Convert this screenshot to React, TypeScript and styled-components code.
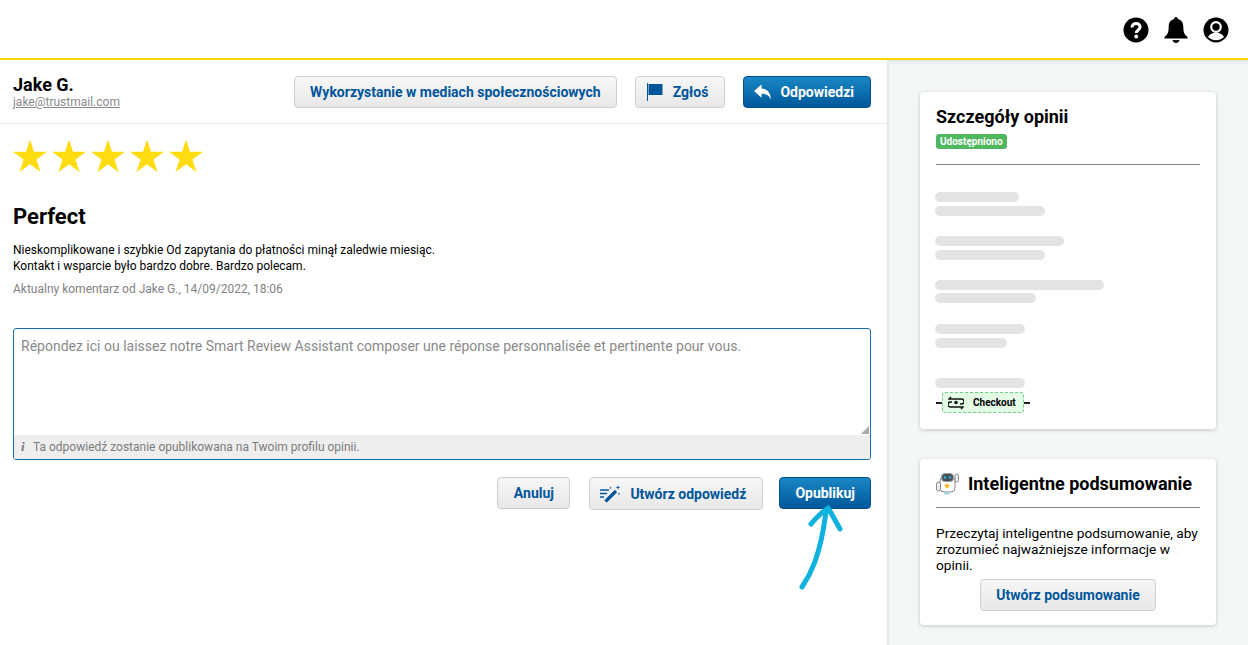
import { createGlobalStyle } from 'styled-components';
import styled from 'styled-components';

const GlobalStyle = createGlobalStyle`
  * {
    box-sizing: border-box;
  }

  html,
  body {
    margin: 0;
    height: 645px;
    overflow: hidden;
    background: #fff;
    font-family: Roboto, 'Liberation Sans', sans-serif;
    color: #000;
  }
`;

const Page = styled.div`
  width: 1248px;
  height: 645px;
  display: flex;
  flex-direction: column;
`;

const TopBar = styled.header`
  height: 60px;
  flex: none;
  padding: 2px 19px 0 0;
  display: flex;
  justify-content: flex-end;
  align-items: center;
  gap: 14px;
  border-bottom: 2px solid #ffd800;

  svg {
    display: block;
  }
`;

const Main = styled.div`
  flex: 1;
  display: flex;
  min-height: 0;
`;

const Content = styled.main`
  position: relative;
  width: 889px;
  flex: none;
  border-right: 2px solid #e6e8e9;
`;

const ReviewHeader = styled.div`
  height: 64px;
  padding: 16px 16px 0 13px;
  display: flex;
  align-items: flex-start;
  border-bottom: 1px solid #ececec;
`;

const Author = styled.div`
  flex: 1;
`;

const AuthorName = styled.div`
  font-size: 18px;
  line-height: 18px;
  font-weight: 700;
`;

const AuthorMail = styled.a`
  display: block;
  margin-top: 1px;
  font-size: 12px;
  line-height: 14px;
  color: #8a8a8a;
  text-decoration: underline;
`;

const Button = styled.button<{ $primary?: boolean; $icon?: boolean; $height?: number }>`
  height: ${(p) => p.$height ?? 32}px;
  padding: 0 ${(p) => (p.$icon ? 16 : 15)}px 0 ${(p) => (p.$icon ? 10 : 15)}px;
  display: inline-flex;
  align-items: center;
  justify-content: center;
  gap: 9px;
  border-radius: 4px;
  border: 1px solid ${(p) => (p.$primary ? '#004f8f' : '#cfcfcf')};
  background: ${(p) =>
    p.$primary
      ? 'linear-gradient(#1a87c4, #00589b)'
      : 'linear-gradient(#f7f7f7, #e8e8e8)'};
  color: ${(p) => (p.$primary ? '#fff' : '#00559b')};
  font-family: Roboto, 'Liberation Sans', sans-serif;
  font-size: 14px;
  font-weight: 700;
  white-space: nowrap;
`;

const CancelButton = styled(Button)`
  width: 73px;
  padding: 0;
  margin-right: 3px;
`;

const HeaderActions = styled.div`
  display: flex;
  gap: 18px;
`;

const Body = styled.div`
  padding: 15px 16px 0 13px;
`;

const Stars = styled.div`
  display: flex;
  gap: 5px;
  height: 34px;

  svg {
    display: block;
  }
`;

const Title = styled.h1`
  margin: 28px 0 0;
  font-size: 22px;
  line-height: 32px;
  font-weight: 700;
`;

const Text = styled.p`
  margin: 9px 0 0;
  font-size: 12px;
  line-height: 16px;
`;

const Meta = styled.div`
  margin-top: 7px;
  font-size: 12px;
  line-height: 16px;
  color: #828282;
`;

const ReplyBox = styled.div`
  position: relative;
  margin-top: 31px;
  height: 132px;
  border: 1px solid #1b6fae;
  border-radius: 3px;
  display: flex;
  flex-direction: column;
  overflow: hidden;
`;

const Placeholder = styled.div`
  flex: 1;
  padding: 8px 7px;
  font-size: 14px;
  line-height: 18px;
  color: #8a8a8a;
`;

const Grip = styled.span`
  position: absolute;
  right: 1px;
  bottom: 25px;
  width: 8px;
  height: 8px;
  background: #a9a9a9;
  clip-path: polygon(100% 0, 100% 100%, 0 100%);
`;

const Hint = styled.div`
  height: 24px;
  flex: none;
  padding: 0 7px;
  display: flex;
  align-items: center;
  gap: 8px;
  background: #eee;
  font-size: 12px;
  color: #7c7c7c;
`;

const HintIcon = styled.i`
  font-family: 'Liberation Serif', serif;
  font-size: 13px;
  font-weight: 700;
  color: #777;
  width: 4px;
`;

const ReplyActions = styled.div`
  margin-top: 17px;
  display: flex;
  justify-content: flex-end;
  gap: 16px;
`;

const ArrowOverlay = styled.svg`
  position: absolute;
  left: 790px;
  top: 440px;
`;

const Side = styled.aside`
  flex: 1;
  background: #f4f7f8;
  padding: 32px 32px 0 31px;
  display: flex;
  flex-direction: column;
  gap: 30px;
  box-shadow: inset 0 4px 4px -2px rgba(0, 0, 0, 0.08);
`;

const Card = styled.section<{ $height: number }>`
  height: ${(p) => p.$height}px;
  flex: none;
  padding: 0 16px;
  background: #fff;
  border-radius: 4px;
  box-shadow: 0 1px 4px rgba(0, 0, 0, 0.2);
`;

const CardTitle = styled.h2`
  margin: 0;
  padding-top: 14px;
  font-size: 18px;
  line-height: 22px;
  font-weight: 700;
`;

const Badge = styled.span`
  display: inline-block;
  margin-top: 6px;
  padding: 0 4px;
  height: 15px;
  border-radius: 3px;
  background: #4fb75f;
  color: #fff;
  font-size: 10px;
  line-height: 15px;
  font-weight: 700;
  vertical-align: top;
`;

const Rule = styled.hr`
  margin: 15px 0 0;
  border: 0;
  border-top: 1px solid #808080;
`;

const Skeletons = styled.div`
  margin-top: 27px;
  display: flex;
  flex-direction: column;
  margin-left: -1px;
`;

const Skeleton = styled.div<{ $width: number; $gap: number }>`
  width: ${(p) => p.$width}px;
  height: 10px;
  margin-top: ${(p) => p.$gap}px;
  border-radius: 5px;
  background: #e3e3e3;
`;

const CheckoutRow = styled.div`
  margin: 4px 0 0 1px;
  display: flex;
  align-items: center;
`;

const Tick = styled.span`
  width: 6px;
  height: 2px;
  background: #222;
`;

const Checkout = styled.div`
  width: 82px;
  height: 21px;
  display: flex;
  align-items: center;
  gap: 9px;
  padding-left: 5px;
  border: 1.5px dashed #6fd08a;
  border-radius: 3px;
  background: #e4fbe6;
  font-size: 10px;
  font-weight: 700;
  white-space: nowrap;
`;

const SummaryHead = styled.div`
  height: 49px;
  display: flex;
  align-items: center;
  gap: 9px;
  padding-top: 1px;
  border-bottom: 1px solid #808080;
  font-size: 18px;
  font-weight: 700;
`;

const SummaryText = styled.p`
  margin: 17px 0 0;
  font-size: 13.7px;
  line-height: 16px;
`;

const SummaryAction = styled.div`
  margin-top: 6px;
  display: flex;
  justify-content: center;
`;

const Star = () => (
  <svg width="34" height="34" viewBox="0 0 34 34">
    <path
      fill="#ffdc10"
      d="M17 .5l4 12.3h13l-10.500 7.600 4 12.600L17 25.200 6.500 33l4-12.600L0 12.800h13z"
    />
  </svg>
);

const App = () => {
  return (
    <>
      <GlobalStyle />
      <Page>
        <TopBar>
          <svg width="26" height="26" viewBox="0 0 26 26">
            <circle cx="13" cy="13" r="12.500" fill="#000" />
            <path
              fill="none"
              stroke="#fff"
              strokeWidth="3"
              d="M9 10.500c0-2.500 1.800-4 4.100-4s4 1.400 4 3.500c0 3-3.800 3-3.800 6"
            />
            <circle cx="13.200" cy="19.500" r="1.900" fill="#fff" />
          </svg>
          <svg width="26" height="26" viewBox="0 0 26 26">
            <path d="M13 0c1.100 0 1.800.8 1.800 1.900 3.800.8 5.500 3.700 5.500 7.600 0 5 .8 8.200 4.200 10.500v1.500h-23V20c3.400-2.300 4.200-5.500 4.200-10.500 0-3.900 1.700-6.800 5.500-7.600C11.200.8 11.900 0 13 0z" />
            <path d="M9.500 23h7c-.5 1.900-1.800 3-3.500 3s-3-1.100-3.500-3z" />
          </svg>
          <svg width="26" height="26" viewBox="0 0 26 26">
            <circle cx="13" cy="13" r="12.500" fill="#000" />
            <circle cx="13" cy="10" r="4.800" fill="none" stroke="#fff" strokeWidth="2.200" />
            <path fill="#fff" d="M5 20c1.500-3 4.500-4.300 8-4.300s6.500 1.300 8 4.300c-2 2-4.700 3.200-8 3.200S7 22 5 20z" />
          </svg>
        </TopBar>

        <Main>
          <Content>
            <ReviewHeader>
              <Author>
                <AuthorName>Jake G.</AuthorName>
                <AuthorMail>jake@trustmail.com</AuthorMail>
              </Author>
              <HeaderActions>
                <Button>Wykorzystanie w mediach społecznościowych</Button>
                <Button $icon>
                  <svg width="18" height="20" viewBox="0 0 18 20">
                    <path fill="#00559b" d="M1 1h1v18H1zM2.500 2H16.500v11H2.500z" />
                  </svg>
                  Zgłoś
                </Button>
                <Button $primary $icon>
                  <svg width="17" height="16" viewBox="0 0 18 16">
                    <path fill="#fff" d="M8 0v4.200c5.500.3 9.500 4 10 11.800-2-4.500-5-6.200-10-6.200V14L0 7z" />
                  </svg>
                  Odpowiedzi
                </Button>
              </HeaderActions>
            </ReviewHeader>

            <Body>
              <Stars>
                <Star />
                <Star />
                <Star />
                <Star />
                <Star />
              </Stars>
              <Title>Perfect</Title>
              <Text>
                Nieskomplikowane i szybkie Od zapytania do płatności minął zaledwie miesiąc.
                <br />
                Kontakt i wsparcie było bardzo dobre. Bardzo polecam.
              </Text>
              <Meta>Aktualny komentarz od Jake G., 14/09/2022, 18:06</Meta>

              <ReplyBox>
                <Placeholder>
                  Répondez ici ou laissez notre Smart Review Assistant composer une réponse
                  personnalisée et pertinente pour vous.
                </Placeholder>
                <Grip />
                <Hint>
                  <HintIcon>i</HintIcon>
                  Ta odpowiedź zostanie opublikowana na Twoim profilu opinii.
                </Hint>
              </ReplyBox>

              <ReplyActions>
                <CancelButton>Anuluj</CancelButton>
                <Button $icon $height={33}>
                  <svg width="21" height="20" viewBox="0 0 21 20" fill="none">
                    <path stroke="#00559b" strokeWidth="1.500" d="M0 6h9M0 9.500h7M0 13h4" />
                    <path stroke="#00559b" strokeWidth="3.200" d="M5.500 17.500L16 7" />
                    <path fill="#00559b" d="M18 1l.6 1.900 1.900.6-1.900.6L18 6l-.6-1.900-1.900-.6 1.900-.6zM10.500 2.500l.4 1 1 .4-1 .4-.4 1-.4-1-1-.4 1-.4zM19 8.500l.4 1 1 .4-1 .4-.4 1-.4-1-1-.4 1-.4z" />
                  </svg>
                  Utwórz odpowiedź
                </Button>
                <Button $primary>Opublikuj</Button>
              </ReplyActions>
            </Body>

            <ArrowOverlay width="60" height="100" viewBox="0 0 60 100" fill="none">
              <path
                stroke="#0fb1de"
                strokeWidth="5"
                strokeLinecap="round"
                strokeLinejoin="round"
                d="M12 87C20 75 30 58 36 12M21 24C27 17 32 12 38 8C42 14 46 22 50 29"
              />
            </ArrowOverlay>
          </Content>

          <Side>
            <Card $height={337}>
              <CardTitle>Szczegóły opinii</CardTitle>
              <Badge>Udostępniono</Badge>
              <Rule />
              <Skeletons>
                <Skeleton $width={84} $gap={0} />
                <Skeleton $width={110} $gap={4} />
                <Skeleton $width={129} $gap={20} />
                <Skeleton $width={110} $gap={4} />
                <Skeleton $width={169} $gap={20} />
                <Skeleton $width={101} $gap={3} />
                <Skeleton $width={90} $gap={21} />
                <Skeleton $width={72} $gap={4} />
                <Skeleton $width={90} $gap={30} />
                <CheckoutRow>
                  <Tick />
                  <Checkout>
                    <svg width="16" height="14" viewBox="0 0 16 14" fill="none" stroke="#111" strokeWidth="1.400">
                      <path d="M5 3h8.500a2 2 0 0 1 0 5H12M3 1L1 3h4M11 11H2.500a2 2 0 0 1 0-5H4M13 13l2-2h-4" />
                      <circle cx="8" cy="6.500" r="1.800" fill="#111" stroke="none" />
                    </svg>
                    Checkout
                  </Checkout>
                  <Tick />
                </CheckoutRow>
              </Skeletons>
            </Card>

            <Card $height={166}>
              <SummaryHead>
                <svg width="23" height="23" viewBox="0 0 23 23">
                  <rect x="4" y="5" width="15" height="15" rx="4" fill="#fff" stroke="#8b8b8b" />
                  <rect x="5.500" y="1.500" width="12" height="8" rx="3.500" fill="#47525c" stroke="#9a9a9a" />
                  <circle cx="9" cy="5.500" r="1.200" fill="#2db8e0" />
                  <circle cx="14" cy="5.500" r="1.200" fill="#2db8e0" />
                  <path fill="#f5b921" d="M11 10.500l1 2.300 2.300.2-1.800 1.500.6 2.300-2.100-1.200-2.100 1.200.6-2.300L7.700 13l2.300-.2z" />
                  <rect x="0.500" y="10" width="4" height="9" rx="2" fill="#eee" stroke="#8b8b8b" />
                  <rect x="19" y="2" width="3.500" height="8" rx="1.700" fill="#eee" stroke="#8b8b8b" />
                  <rect x="8" y="21" width="6" height="1.500" rx="0.700" fill="#8fdcef" />
                </svg>
                Inteligentne podsumowanie
              </SummaryHead>
              <SummaryText>
                Przeczytaj inteligentne podsumowanie, aby zrozumieć najważniejsze informacje w
                opinii.
              </SummaryText>
              <SummaryAction>
                <Button>Utwórz podsumowanie</Button>
              </SummaryAction>
            </Card>
          </Side>
        </Main>
      </Page>
    </>
  );
};

export default App;
